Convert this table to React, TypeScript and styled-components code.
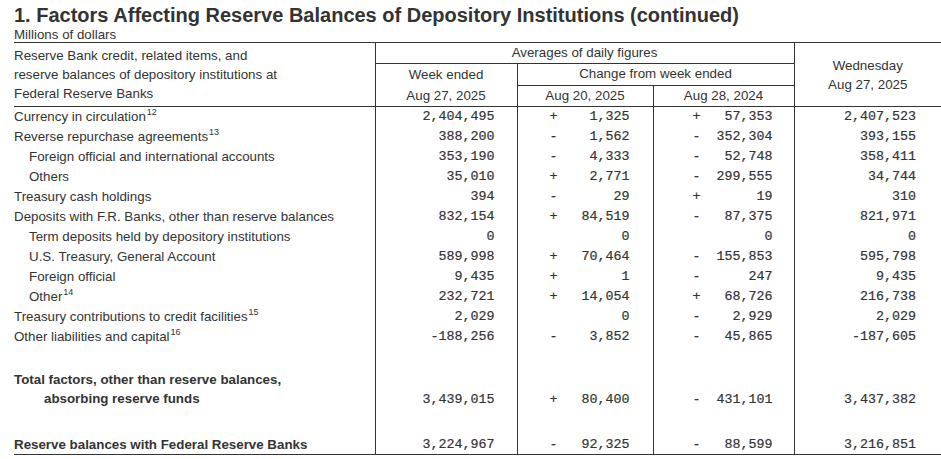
import React from "react";
import styled, { createGlobalStyle } from "styled-components";

const GlobalStyle = createGlobalStyle`
  body {
    margin: 0;
    overflow: hidden;
    background: #fff;
    color: #333;
    font-family: "Liberation Sans", Arial, sans-serif;
  }
`;

const Page = styled.div`
  padding-left: 14px;
`;

const Title = styled.h1`
  margin: 0;
  padding-top: 3px;
  font-size: 20px;
  line-height: 24px;
  font-weight: bold;
`;

const Subtitle = styled.div`
  font-size: 13.33px;
  line-height: 15px;
`;

const Table = styled.table`
  border-collapse: collapse;
  table-layout: fixed;
  width: 927px;
  font-size: 13.33px;
  border-top: 1px solid #333;
  border-bottom: 1px solid #333;
`;

const HeadRow = styled.tr`
  height: 21px;
`;

const LabelHead = styled.th`
  font-weight: normal;
  text-align: left;
  vertical-align: middle;
  line-height: 19px;
  padding: 0;
  border-right: 1px solid #333;
  border-bottom: 1px solid #333;
`;

const GroupHead = styled.th<{ $last?: boolean }>`
  font-weight: normal;
  text-align: center;
  padding: 0;
  line-height: 20px;
  border-bottom: 1px solid #333;
  border-right: ${(p) => (p.$last ? "1px solid #333" : "none")};
`;

const StackHead = styled.th<{ $lh: number; $divider?: boolean }>`
  font-weight: normal;
  text-align: center;
  vertical-align: middle;
  padding: 0;
  line-height: ${(p) => p.$lh}px;
  border-bottom: 1px solid #333;
  border-right: ${(p) => (p.$divider ? "1px solid #333" : "none")};
`;

const Row = styled.tr<{ $h?: number }>`
  height: ${(p) => p.$h ?? 20}px;
`;

const Label = styled.td<{ $indent?: number; $bold?: boolean }>`
  padding: 0 0 0 ${(p) => (p.$indent ?? 0) * 15}px;
  line-height: 19px;
  white-space: nowrap;
  font-weight: ${(p) => (p.$bold ? "bold" : "normal")};
  border-right: 1px solid #333;
  vertical-align: middle;
`;

const Num = styled.td<{ $pad: number; $divider?: boolean; $bottom?: boolean }>`
  padding: 0 ${(p) => p.$pad}px 0 0;
  text-align: right;
  white-space: pre;
  font-family: "Liberation Mono", "Courier New", monospace;
  font-size: 13.33px;
  line-height: 19px;
  -webkit-text-stroke: 0.2px #333;
  vertical-align: ${(p) => (p.$bottom ? "bottom" : "middle")};
  border-right: ${(p) => (p.$divider ? "1px solid #333" : "none")};
`;

const Sup = styled.span`
  font-size: 9px;
  line-height: 11px;
  vertical-align: top;
  margin-left: 1px;
`;

const WrapLine = styled.div<{ $indent?: number }>`
  padding-left: ${(p) => (p.$indent ?? 0) * 15}px;
`;

type Values = {
  week: string;
  d1: [string, string];
  d2: [string, string];
  wed: string;
};

type Item = Values & {
  label: string;
  note?: string;
  indent?: number;
};

const items: Item[] = [
  { label: "Currency in circulation", note: "12", week: "2,404,495", d1: ["+", "1,325"], d2: ["+", "57,353"], wed: "2,407,523" },
  { label: "Reverse repurchase agreements", note: "13", week: "388,200", d1: ["-", "1,562"], d2: ["-", "352,304"], wed: "393,155" },
  { label: "Foreign official and international accounts", indent: 1, week: "353,190", d1: ["-", "4,333"], d2: ["-", "52,748"], wed: "358,411" },
  { label: "Others", indent: 1, week: "35,010", d1: ["+", "2,771"], d2: ["-", "299,555"], wed: "34,744" },
  { label: "Treasury cash holdings", week: "394", d1: ["-", "29"], d2: ["+", "19"], wed: "310" },
  { label: "Deposits with F.R. Banks, other than reserve balances", week: "832,154", d1: ["+", "84,519"], d2: ["-", "87,375"], wed: "821,971" },
  { label: "Term deposits held by depository institutions", indent: 1, week: "0", d1: ["", "0"], d2: ["", "0"], wed: "0" },
  { label: "U.S. Treasury, General Account", indent: 1, week: "589,998", d1: ["+", "70,464"], d2: ["-", "155,853"], wed: "595,798" },
  { label: "Foreign official", indent: 1, week: "9,435", d1: ["+", "1"], d2: ["-", "247"], wed: "9,435" },
  { label: "Other", note: "14", indent: 1, week: "232,721", d1: ["+", "14,054"], d2: ["+", "68,726"], wed: "216,738" },
  { label: "Treasury contributions to credit facilities", note: "15", week: "2,029", d1: ["", "0"], d2: ["-", "2,929"], wed: "2,029" },
  { label: "Other liabilities and capital", note: "16", week: "-188,256", d1: ["-", "3,852"], d2: ["-", "45,865"], wed: "-187,605" },
];

// sign in the first column of a ten character field, figure right aligned
const change = (v: [string, string]) => (v[0] || " ") + v[1].padStart(9, " ");

const Cells = ({ v, bottom }: { v: Values; bottom?: boolean }) => (
  <>
    <Num $pad={22} $divider $bottom={bottom}>{v.week}</Num>
    <Num $pad={23} $divider $bottom={bottom}>{change(v.d1)}</Num>
    <Num $pad={21} $divider $bottom={bottom}>{change(v.d2)}</Num>
    <Num $pad={25} $bottom={bottom}>{v.wed}</Num>
  </>
);

const Spacer = ({ h }: { h: number }) => (
  <Row $h={h}>
    <Label />
    <Num $pad={0} $divider />
    <Num $pad={0} $divider />
    <Num $pad={0} $divider />
    <Num $pad={0} />
  </Row>
);

export default function App() {
  return (
    <Page>
      <GlobalStyle />
      <Title>1. Factors Affecting Reserve Balances of Depository Institutions (continued)</Title>
      <Subtitle>Millions of dollars</Subtitle>
      <Table>
        <colgroup>
          <col style={{ width: 361 }} />
          <col style={{ width: 142 }} />
          <col style={{ width: 136 }} />
          <col style={{ width: 141 }} />
          <col style={{ width: 147 }} />
        </colgroup>
        <thead>
          <HeadRow>
            <LabelHead rowSpan={3}>
              Reserve Bank credit, related items, and
              <br />
              reserve balances of depository institutions at
              <br />
              Federal Reserve Banks
            </LabelHead>
            <GroupHead colSpan={3} $last>Averages of daily figures</GroupHead>
            <StackHead rowSpan={3} $lh={19}>
              Wednesday
              <br />
              Aug 27, 2025
            </StackHead>
          </HeadRow>
          <HeadRow>
            <StackHead rowSpan={2} $lh={21} $divider>
              Week ended
              <br />
              Aug 27, 2025
            </StackHead>
            <GroupHead colSpan={2} $last>Change from week ended</GroupHead>
          </HeadRow>
          <HeadRow>
            <StackHead $lh={20} $divider>Aug 20, 2025</StackHead>
            <StackHead $lh={20} $divider>Aug 28, 2024</StackHead>
          </HeadRow>
        </thead>
        <tbody>
          {items.map((it) => (
            <Row key={it.label}>
              <Label $indent={it.indent}>
                {it.label}
                {it.note && <Sup>{it.note}</Sup>}
              </Label>
              <Cells v={it} />
            </Row>
          ))}
          <Spacer h={23} />
          <Row $h={39}>
            <Label $bold>
              <WrapLine>Total factors, other than reserve balances,</WrapLine>
              <WrapLine $indent={2}>absorbing reserve funds</WrapLine>
            </Label>
            <Cells
              bottom
              v={{ week: "3,439,015", d1: ["+", "80,400"], d2: ["-", "431,101"], wed: "3,437,382" }}
            />
          </Row>
          <Spacer h={26} />
          <Row>
            <Label $bold>Reserve balances with Federal Reserve Banks</Label>
            <Cells v={{ week: "3,224,967", d1: ["-", "92,325"], d2: ["-", "88,599"], wed: "3,216,851" }} />
          </Row>
        </tbody>
      </Table>
    </Page>
  );
}
